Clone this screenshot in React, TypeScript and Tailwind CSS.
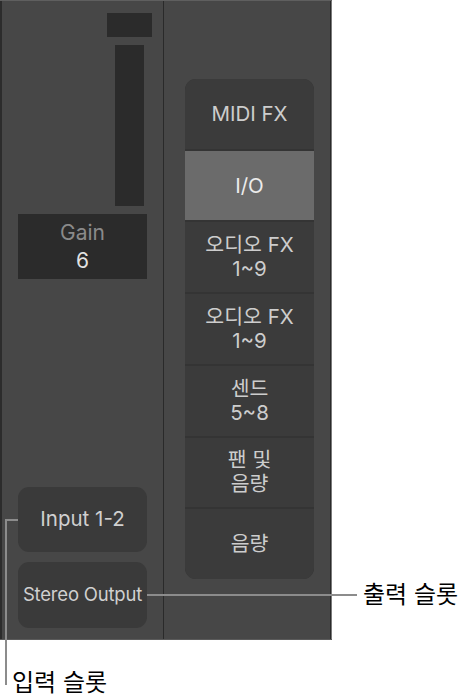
import React from 'react';

const slots = [
  { label: ['MIDI FX'] },
  { label: ['I/O'], active: true },
  { label: ['오디오 FX', '1~9'] },
  { label: ['오디오 FX', '1~9'] },
  { label: ['센드', '5~8'] },
  { label: ['팬 및', '음량'] },
  { label: ['음량'] },
];

export default function App() {
  return (
    <div
      className="relative w-[463px] h-[700px] bg-white"
      style={{ fontFamily: 'Inter, "Noto Sans CJK KR", sans-serif' }}
    >
      {/* channel strip */}
      <div className="flex w-[332px] h-[640px] bg-[#474747] border-t border-[#5f5f5f] border-b border-b-[#5a5a5a]">
        <div className="w-[2px] bg-[#2c2c2c]" />

        {/* left column: meter, gain, input/output */}
        <div className="w-[161px] flex flex-col">
          <div className="ml-[105px] mt-[12px] w-[45px] h-[24px] bg-[#2b2b2b]" />
          <div className="ml-[113px] mt-[8px] w-[29px] h-[161px] bg-[#2b2b2b]" />
          <div className="ml-[16px] mt-[8px] w-[129px] h-[65px] bg-[#2b2b2b] flex flex-col items-center justify-center leading-[28px]">
            <span className="text-[21px] text-[#8a8a8a]">Gain</span>
            <span className="text-[21px] text-[#e2e2e2]">6</span>
          </div>
          <div className="flex-1" />
          <div className="ml-[16px] w-[129px] h-[65px] rounded-[11px] bg-[#3a3a3a] flex items-center justify-center">
            <span className="text-[20.5px] text-[#d0d0d0]">Input 1-2</span>
          </div>
          <div className="ml-[16px] mt-[10px] mb-[11px] w-[129px] h-[66px] rounded-[11px] bg-[#3a3a3a] flex items-center justify-center">
            <span className="text-[18.5px] tracking-[-0.2px] text-[#d0d0d0]">Stereo Output</span>
          </div>
        </div>

        <div className="w-px bg-[#2a2a2a]" />

        {/* right column: slot stack */}
        <div className="flex-1 flex flex-col">
          <div className="ml-[21px] mt-[78px] w-[129px] h-[500px] rounded-[11px] overflow-hidden bg-[#343434] flex flex-col gap-[2px]">
            {slots.map((s, i) => (
              <div
                key={i}
                className={`flex-1 flex flex-col items-center justify-center leading-[24px] text-[20.5px] ${
                  s.active ? 'bg-[#6b6b6b] text-[#ececec]' : 'bg-[#3b3b3b] text-[#cdcdcd]'
                }`}
              >
                {s.label.map((l, j) => (
                  <span key={j}>{l}</span>
                ))}
              </div>
            ))}
          </div>
        </div>

        <div className="w-px bg-[#2a2a2a]" />
        <div className="w-px bg-[#7a7a7a]" />
      </div>

      {/* callouts */}
      <div className="absolute left-[147px] top-[594px] w-[210px] h-[2px] bg-[#8c8c8c]" />
      <div className="absolute left-[363px] top-[579px] h-[32px] flex items-center text-[24px] text-black">
        출력 슬롯
      </div>

      <div className="absolute left-[5px] top-[519px] w-[13px] h-[2px] bg-[#8c8c8c]" />
      <div className="absolute left-[5px] top-[519px] w-[2px] h-[166px] bg-[#8c8c8c]" />
      <div className="absolute left-[12px] top-[667px] h-[32px] flex items-center text-[24px] text-black">
        입력 슬롯
      </div>
    </div>
  );
}
